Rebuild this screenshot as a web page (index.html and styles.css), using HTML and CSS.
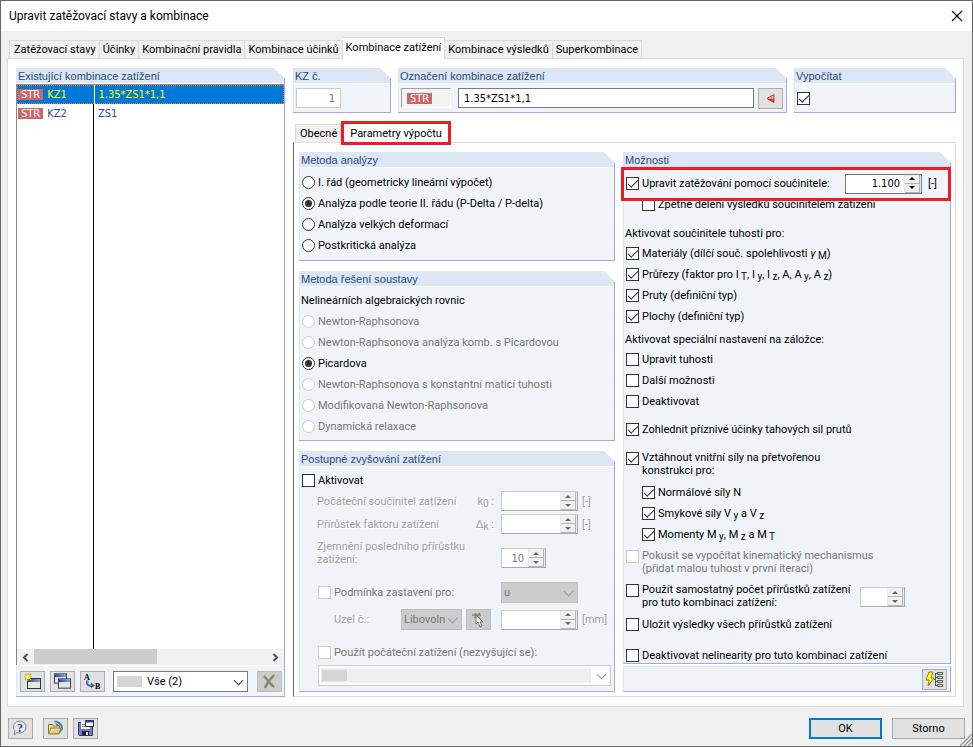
FILE: index.html
```html
<!DOCTYPE html>
<html lang="cs">
<head>
<meta charset="utf-8">
<title>Upravit zatěžovací stavy a kombinace</title>
<link rel="stylesheet" href="styles.css">
</head>
<body>
<svg class="defs" aria-hidden="true">
  <defs>
    <linearGradient id="bar" x1="0" x2="1"><stop offset="0" stop-color="#24449a"/><stop offset="1" stop-color="#8fa5dd"/></linearGradient>
    <linearGradient id="folder" x1="0" y1="0" x2="1" y2="1"><stop offset="0" stop-color="#fff4b8"/><stop offset="1" stop-color="#c9b055"/></linearGradient>
    <symbol id="win" viewBox="0 0 14 11"><rect x=".5" y=".5" width="13" height="10" fill="#e6e6e6" stroke="#333"/><rect x="1" y="1" width="12" height="3" fill="url(#bar)"/></symbol>
  </defs>
</svg>
<div class="window">
  <header class="titlebar">
    <h1>Upravit zatěžovací stavy a kombinace</h1>
    <button class="close" aria-label="Zavřít"><svg width="12" height="12" viewBox="0 0 12 12"><path d="M1 1l10 10M11 1L1 11" stroke="#000" stroke-width="1.2"/></svg></button>
  </header>

  <nav class="tabs main-tabs">
    <button class="tab">Zatěžovací stavy</button>
    <button class="tab">Účinky</button>
    <button class="tab">Kombinační pravidla</button>
    <button class="tab">Kombinace účinků</button>
    <button class="tab active">Kombinace zatížení</button>
    <button class="tab">Kombinace výsledků</button>
    <button class="tab">Superkombinace</button>
  </nav>

  <main class="page">
    <section class="group list-group">
      <h2>Existující kombinace zatížení</h2>
      <div class="list">
        <table>
          <tr class="selected"><td><span class="str">STR</span>KZ1</td><td>1.35*ZS1*1,1</td></tr>
          <tr><td><span class="str">STR</span>KZ2</td><td>ZS1</td></tr>
        </table>
      </div>
      <div class="scrollbar">
        <button aria-label="Vlevo"><svg width="7" height="9" viewBox="0 0 7 9"><path d="M5.500 1L2 4.500l3.500 3.500" fill="none" stroke="#505050" stroke-width="2"/></svg></button>
        <div class="track"><div class="thumb"></div></div>
        <button aria-label="Vpravo"><svg width="7" height="9" viewBox="0 0 7 9"><path d="M1.500 1L5 4.500L1.500 8" fill="none" stroke="#505050" stroke-width="2"/></svg></button>
      </div>
      <div class="toolbar">
        <button class="icon-btn" aria-label="Nová kombinace"><svg width="17" height="17" viewBox="0 0 17 17"><use href="#win" x="3" y="5" width="14" height="11"/><path d="M4 0v8M0 4h8M1 1l6 6M7 1L1 7" stroke="#c9b800" stroke-width="1.200"/><circle cx="4" cy="4" r="2" fill="#ffff45"/></svg></button>
        <button class="icon-btn" aria-label="Kopírovat kombinaci"><svg width="17" height="17" viewBox="0 0 17 17"><use href="#win" x="0" y="0" width="13" height="11"/><use href="#win" x="4" y="5" width="13" height="11"/></svg></button>
        <button class="icon-btn" aria-label="Přečíslovat"><svg width="17" height="17" viewBox="0 0 17 17"><text x="0" y="7" class="glyph">A</text><text x="11" y="16" class="glyph">B</text><path d="M3.500 7.500C2.500 12 5 13 8 12.500" fill="none" stroke="#4967a8" stroke-width="2.600"/><path d="M4 8c0 3 1 4 4 4" fill="none" stroke="#b9cdf0"/><path d="M7 9.500l4 3-4 3z" fill="#4967a8"/></svg></button>
        <div class="combo filter"><select aria-label="Filtr"><option>Vše (2)</option></select><span class="swatch"></span></div>
        <button class="icon-btn off" aria-label="Smazat" disabled><svg width="15" height="15" viewBox="0 0 15 15"><path d="M2 2c3 3 6 8 10 11M12 1C8 5 5 9 3 14" fill="none" stroke="#858579" stroke-width="2.400"/></svg></button>
      </div>
    </section>

    <div class="detail">
      <div class="top-row">
        <section class="group">
          <h2><label for="number">KZ č.</label></h2>
          <div class="inline"><input id="number" class="text number" value="1" disabled></div>
        </section>
        <section class="group">
          <h2><label for="name">Označení kombinace zatížení</label></h2>
          <div class="inline">
            <span class="category"><span class="str">STR</span></span>
            <input id="name" class="text name" value="1.35*ZS1*1,1">
            <button class="icon-btn pick" aria-label="Vybrat"><svg width="11" height="11" viewBox="0 0 11 11"><path d="M2 5.500L9 1.500v8z" fill="#f4a0a0" stroke="#a84848"/><path d="M2 5.500L9 9.500v-3z" fill="#d82020"/></svg></button>
          </div>
        </section>
        <section class="group">
          <h2><label for="calc">Vypočítat</label></h2>
          <div class="inline"><input type="checkbox" id="calc" checked></div>
        </section>
      </div>

      <nav class="tabs sub-tabs">
        <button class="tab">Obecné</button>
        <button class="tab active marked">Parametry výpočtu</button>
      </nav>

      <div class="params">
        <div class="column spaced">
          <section class="group">
            <h2>Metoda analýzy</h2>
            <div class="rows method">
              <label class="row"><input type="radio" name="m">I. řád (geometricky lineární výpočet)</label>
              <label class="row"><input type="radio" name="m" checked>Analýza podle teorie II. řádu (P-Delta / P-delta)</label>
              <label class="row"><input type="radio" name="m">Analýza velkých deformací</label>
              <label class="row"><input type="radio" name="m">Postkritická analýza</label>
            </div>
          </section>
          <section class="group">
            <h2>Metoda řešení soustavy</h2>
            <div class="rows">
              <p class="row">Nelineárních algebraických rovnic</p>
              <label class="row dim"><input type="radio" name="s" disabled>Newton-Raphsonova</label>
              <label class="row dim"><input type="radio" name="s" disabled>Newton-Raphsonova analýza komb. s Picardovou</label>
              <label class="row"><input type="radio" name="s" checked>Picardova</label>
              <label class="row dim"><input type="radio" name="s" disabled>Newton-Raphsonova s konstantní maticí tuhosti</label>
              <label class="row dim"><input type="radio" name="s" disabled>Modifikovaná Newton-Raphsonova</label>
              <label class="row dim"><input type="radio" name="s" disabled>Dynamická relaxace</label>
            </div>
          </section>
          <section class="group grow">
            <h2>Postupné zvyšování zatížení</h2>
            <div class="rows">
              <label class="row"><input type="checkbox">Aktivovat</label>
              <div class="steps">
                <label class="etched" for="k0">Počáteční součinitel zatížení</label><span class="etched sym">k<sub>0</sub> :</span>
                <span class="spin off"><input id="k0" disabled><span class="arrows"><button disabled aria-label="Zvýšit"></button><button disabled aria-label="Snížit"></button></span></span><span class="etched">[-]</span>
                <label class="etched" for="dk">Přírůstek faktoru zatížení</label><span class="etched sym">Δ<sub>k</sub> :</span>
                <span class="spin off"><input id="dk" disabled><span class="arrows"><button disabled aria-label="Zvýšit"></button><button disabled aria-label="Snížit"></button></span></span><span class="etched">[-]</span>
              </div>
              <div class="steps refine">
                <label class="etched two" for="ref">Zjemnění posledního přírůstku zatížení:</label>
                <span class="spin off small"><input id="ref" value="10" disabled><span class="arrows"><button disabled aria-label="Zvýšit"></button><button disabled aria-label="Snížit"></button></span></span>
              </div>
              <div class="steps stop">
                <label class="row dim wide"><input type="checkbox" disabled>Podmínka zastavení pro:</label>
                <div class="combo off"><select disabled aria-label="Veličina"><option>u</option></select></div>
              </div>
              <div class="steps node">
                <label class="etched node-label" for="node">Uzel č.:</label>
                <div class="node-pick">
                  <div class="combo off"><select id="node" disabled><option>Libovolný</option></select></div>
                  <button class="icon-btn off" disabled aria-label="Vybrat uzel"><svg width="16" height="16" viewBox="0 0 16 16"><path d="M1 3h9M4 1l5 6M9 1L3 6" stroke="#858585" stroke-width="1.500"/><path d="M5 3v9l2-2 2 5 2-1-2-4h3z" fill="#f2f2e8" stroke="#777"/></svg></button>
                </div>
                <span class="spin off"><input disabled aria-label="Mezní hodnota"><span class="arrows"><button disabled aria-label="Zvýšit"></button><button disabled aria-label="Snížit"></button></span></span><span class="etched">[mm]</span>
              </div>
              <label class="row dim indent initial"><input type="checkbox" disabled>Použít počáteční zatížení (nezvyšující se):</label>
              <div class="combo load"><select disabled aria-label="Počáteční zatížení"><option></option></select><span class="fill"></span><span class="swatch"></span></div>
            </div>
          </section>
        </div>

        <div class="column options">
          <section class="group grow">
            <h2>Možnosti</h2>
            <div class="rows opts">
              <div class="row factor">
                <label class="row"><input type="checkbox" checked>Upravit zatěžování pomocí součinitele:</label>
                <span class="spin"><input value="1.100" aria-label="Součinitel"><span class="arrows"><button aria-label="Zvýšit"></button><button aria-label="Snížit"></button></span></span><span>[-]</span>
              </div>
              <label class="row indent"><input type="checkbox">Zpětné dělení výsledků součinitelem zatížení</label>
              <p class="row caption first">Aktivovat součinitele tuhosti pro:</p>
              <label class="row"><input type="checkbox" checked><span>Materiály (dílčí souč. spolehlivosti <i>γ</i><sub> M</sub>)</span></label>
              <label class="row"><input type="checkbox" checked><span>Průřezy (faktor pro I<sub> T</sub>, I<sub> y</sub>, I<sub> z</sub>, A, A<sub> y</sub>, A<sub> z</sub>)</span></label>
              <label class="row"><input type="checkbox" checked>Pruty (definiční typ)</label>
              <label class="row"><input type="checkbox" checked>Plochy (definiční typ)</label>
              <p class="row caption">Aktivovat speciální nastavení na záložce:</p>
              <label class="row"><input type="checkbox">Upravit tuhosti</label>
              <label class="row"><input type="checkbox">Další možnosti</label>
              <label class="row"><input type="checkbox">Deaktivovat</label>
              <label class="row tension"><input type="checkbox" checked>Zohlednit příznivé účinky tahových sil prutů</label>
              <label class="row pair forces"><input type="checkbox" checked><span>Vztáhnout vnitřní síly na přetvořenou<br>konstrukci pro:</span></label>
              <label class="row indent"><input type="checkbox" checked>Normálové síly N</label>
              <label class="row indent"><input type="checkbox" checked><span>Smykové síly V<sub> y</sub> a V<sub> z</sub></span></label>
              <label class="row indent"><input type="checkbox" checked><span>Momenty M<sub> y</sub>, M<sub> z</sub> a M<sub> T</sub></span></label>
              <label class="row pair dim kinematic"><input type="checkbox" disabled><span>Pokusit se vypočítat kinematický mechanismus<br>(přidat malou tuhost v první iteraci)</span></label>
              <div class="row pair increments">
                <label class="row pair"><input type="checkbox"><span>Použít samostatný počet přírůstků zatížení<br>pro tuto kombinaci zatížení:</span></label>
                <span class="spin off small"><input disabled aria-label="Počet přírůstků"><span class="arrows"><button disabled aria-label="Zvýšit"></button><button disabled aria-label="Snížit"></button></span></span>
              </div>
              <label class="row save"><input type="checkbox">Uložit výsledky všech přírůstků zatížení</label>
              <label class="row nonlinear"><input type="checkbox">Deaktivovat nelinearity pro tuto kombinaci zatížení</label>
            </div>
          </section>
          <div class="strip">
            <button class="icon-btn" aria-label="Podrobnosti"><svg width="19" height="17" viewBox="0 0 19 17"><path d="M4 1L1 9h3l-1 6 6-8H6l2-6z" fill="#ffff20" stroke="#8a8420"/><path d="M9 8.500h2M10.500 2v13M10.500 2.500h2M10.500 6.500h2M10.500 10.500h2M10.500 14.500h2" stroke="#555" fill="none"/><path d="M12.500 1.500h5v2h-5zM12.500 5.500h5v2h-5zM12.500 9.500h5v2h-5zM12.500 13.500h5v2h-5z" fill="#eee" stroke="#555"/></svg></button>
          </div>
          <span class="highlight"></span>
        </div>
      </div>
    </div>
  </main>

  <footer class="footer">
    <button class="icon-btn" aria-label="Nápověda"><svg width="17" height="17" viewBox="0 0 17 17"><path d="M8 1a6.500 6 0 1 1-3 11.500L2 15l1-4A6.500 6 0 0 1 8 1z" fill="#e9edf2" stroke="#7d858d"/><text x="5" y="12" class="question">?</text></svg></button>
    <button class="icon-btn gap" aria-label="Otevřít"><svg width="17" height="17" viewBox="0 0 17 17"><path d="M7 1c5-1 9 3 9 8l-3 4z" fill="#4f78ad"/><path d="M8 3c3 0 5 2 6 6" stroke="#dfeaff" fill="none"/><path d="M1.500 14V4.500h4l1 1.500h6v3" fill="#ead98a" stroke="#8d7c36"/><path d="M1.500 14l2.500-6h10l-2 6z" fill="url(#folder)" stroke="#8d7c36"/></svg></button>
    <button class="icon-btn" aria-label="Uložit"><svg width="17" height="17" viewBox="0 0 17 17"><path d="M1.500 2.500h14v13h-13l-1-1z" fill="#7777cf" stroke="#34346e"/><path d="M4 2h9v7H4z" fill="#f5f5f5"/><path d="M5 4.500h5M5 6.500h6" stroke="#888"/><path d="M5 11h7v4H5z" fill="#222"/><path d="M9 12h2v3H9z" fill="#eee"/><path d="M8.500.5h8v6h-8z" fill="#fff" stroke="#222"/><path d="M8 1.500h9" stroke="#24449a" stroke-width="2"/></svg></button>
    <button class="action primary">OK</button>
    <button class="action">Storno</button>
    <svg class="grip" width="12" height="12" viewBox="0 0 12 12"><path d="M0 12L12 0M4 12l8-8M8 12l4-4" stroke="#999" stroke-width="1.500"/></svg>
  </footer>
</div>
</body>
</html>
```
FILE: styles.css
```css
* { box-sizing: border-box; }

body {
  margin: 0;
  font: 11px/13px Roboto, "Liberation Sans", sans-serif;
  color: #000;
}

button, input, select { font: inherit; color: inherit; margin: 0; padding: 0; }
h1, h2, p { margin: 0; font-weight: normal; }
svg { display: block; }
.defs { position: absolute; width: 0; height: 0; }

.window {
  display: flex;
  flex-direction: column;
  position: relative;
  min-height: 100vh;
  border: 1px solid #666;
  background: #f0f0f0;
}

.titlebar {
  display: flex;
  align-items: center;
  justify-content: space-between;
  height: 30px;
  padding: 0 9px 0 8px;
  background: #fff;
}
.titlebar h1 { font-size: 12px; }
.close { border: 0; background: none; }

/* Tabs */
.tabs { display: flex; align-items: flex-end; }
.main-tabs { padding: 6px 8px 0; }
.tab {
  height: 18px;
  padding: 0 3px;
  border: 1px solid #d9d9d9;
  border-width: 1px 1px 0 0;
  background: #f0f0f0;
  white-space: nowrap;
}
.tab:first-child { padding-left: 4px; border-left-width: 1px; }
.tab.active {
  position: relative;
  height: 22px;
  margin-bottom: -1px;
  padding-bottom: 2px;
  background: #fff;
}
.sub-tabs { padding: 8px 2px 0; }
.tab.marked {
  height: 24px;
  margin-bottom: -3px;
  padding: 0 6px;
  border: 3px solid #ed1c24;
}

.page {
  display: grid;
  grid-template-columns: 269fr 663fr;
  gap: 8px;
  flex: 1;
  margin: 0 8px 0 6px;
  padding: 9px 7px 9px 8px;
  border: 1px solid #dcdcdc;
  background: #fff;
}

/* Titled boxes with a cut corner */
.group {
  border: 1px solid #a6a6e8;
  border-width: 0 1px 1px 0;
  background: #f0f4f9;
  box-shadow: inset 1px 0 #dce6f4;
  clip-path: polygon(0 0, calc(100% - 11px) 0, 100% 11px, 100% 100%, 0 100%);
}
.group h2 {
  height: 16px;
  padding-left: 2px;
  border-bottom: 1px solid #fff;
  background: #dce6f4;
  color: #1f4e79;
  font: 11px/16px "Liberation Sans", Arial, sans-serif;
}
.grow { flex: 1; }

/* List of combinations */
.list-group { display: flex; flex-direction: column; }
.list {
  flex: 1;
  border: 1px solid #828790;
  border-width: 1px 0 0 1px;
  background: linear-gradient(#000, #000) 76px 0 / 1px 100% no-repeat #fff;
}
.list table { width: 100%; border-collapse: collapse; }
.list td {
  height: 19px;
  padding: 0 0 0 4px;
  color: #2a4a9c;
  font-family: "DejaVu Sans Condensed", sans-serif;
}
.list td:first-child { width: 77px; padding-left: 1px; }
.list .selected td { color: #ff0; background: #0078d7; }
.list .selected td:first-child { border-right: 1px solid #fff; }
.list .selected { outline: 1px dotted #e08030; outline-offset: -1px; }
.str {
  display: inline-block;
  margin-right: 4px;
  padding: 0 3px;
  background: #cd6666;
  color: #fff;
  font: 11px/11px "DejaVu Sans Condensed", sans-serif;
}
.scrollbar { display: flex; height: 16px; background: #f0f0f0; border-left: 1px solid #828790; }
.scrollbar button { display: grid; place-items: center; width: 17px; border: 0; background: none; }
.track { flex: 1; }
.thumb { width: 53%; height: 15px; background: #cdcdcd; }
.toolbar {
  display: flex;
  align-items: center;
  gap: 5px;
  height: 31px;
  padding: 0 2px 0 4px;
  border-top: 1px solid #fff;
}
.filter { flex: 1; margin: 0 4px 0 3px; }
.glyph { font: bold 8px "Liberation Serif", serif; }
.question { font: bold 12px "Liberation Serif", serif; fill: #24449a; }

/* Controls */
.icon-btn {
  display: grid;
  place-items: center;
  width: 25px;
  height: 21px;
  border: 1px solid #adadad;
  background: #e1e1e1;
}
.icon-btn.off { border-color: #bfbfbf; background: #ccc; }

.combo { position: relative; height: 21px; }
.combo select {
  display: block;
  appearance: none;
  width: 100%;
  height: 100%;
  padding: 0 16px 0 2px;
  border: 1px solid #7a7a7a;
  border-radius: 0;
  background: #fff;
  opacity: 1;
}
.combo::after {
  content: "";
  position: absolute;
  right: 6px;
  top: 6px;
  width: 6px;
  height: 6px;
  border: 1px solid #444;
  border-width: 0 1px 1px 0;
  transform: rotate(45deg);
}
.combo.off select { border-color: #bfbfbf; background: #ccc; color: #777; }
.combo.off::after, .combo.load::after { border-color: #999; }
.combo.filter select { padding-left: 33px; }
.swatch { position: absolute; left: 4px; top: 5px; width: 25px; height: 11px; background: #d5d5d5; }
.combo.load select { border-color: #ccc; }
.fill { position: absolute; left: 3px; top: 3px; right: 20px; bottom: 3px; background: #efefef; }

.text {
  height: 20px;
  border: 1px solid #7a7a7a;
  background: #fff;
  font-family: "DejaVu Sans Condensed", sans-serif;
}
.text.number { width: 45px; padding-right: 5px; border-color: #ccc; color: #777; text-align: right; }
.text.name { flex: 1; min-width: 0; padding-left: 5px; }

input[type="checkbox"], input[type="radio"] {
  appearance: none;
  position: relative;
  flex: none;
  width: 13px;
  height: 13px;
  border: 1px solid #333;
  background: #fff;
}
input[type="radio"] { border-radius: 50%; }
input[type="radio"]:checked::before {
  content: "";
  position: absolute;
  inset: 2px;
  border-radius: 50%;
  background: #333;
}
input[type="checkbox"]:checked::before {
  content: "";
  position: absolute;
  left: 1px;
  top: 2px;
  width: 9px;
  height: 4px;
  border: 1px solid #333;
  border-width: 0 0 1px 1px;
  transform: rotate(-45deg);
}
input[type="checkbox"]:disabled, input[type="radio"]:disabled { border-color: #ccc; }

.spin {
  display: flex;
  width: 77px;
  height: 20px;
  border: 1px solid #7a7a7a;
  background: #fff;
}
.spin input {
  flex: 1;
  min-width: 0;
  padding-right: 4px;
  border: 0;
  background: none;
  font-family: "DejaVu Sans Condensed", sans-serif;
  text-align: right;
}
.spin.small { width: 45px; }
.spin.off { border-color: #ccc #aaa #aaa #ccc; color: #777; }
.arrows { display: flex; flex-direction: column; width: 17px; padding: 0 1px; background: #e8e8e8; }
.arrows button {
  display: grid;
  place-items: center;
  flex: 1;
  border: 1px solid #b5b5b5;
  border-width: 0 1px 1px 0;
  background: #f0f0f0;
}
.arrows button::before {
  content: "";
  border: 3px solid transparent;
  border-top-width: 0;
  border-bottom-color: #000;
}
.arrows button:last-child::before { transform: rotate(180deg); }
.off .arrows button::before { border-bottom-color: #666; }

/* Combination header */
.detail { display: flex; flex-direction: column; min-width: 0; }
.top-row { display: grid; grid-template-columns: 98fr 389fr 162fr; gap: 7px; }
.inline { display: flex; align-items: center; height: 28px; padding: 0 3px; }
.category {
  display: flex;
  align-items: center;
  width: 50px;
  height: 20px;
  margin-right: 7px;
  padding-left: 5px;
  border: 1px solid #a0a0a0;
  border-color: #a0a0a0 #fff #fff #a0a0a0;
  background: #f3f3f3;
}
.pick { margin-left: 4px; }

/* Calculation parameters */
.params {
  display: grid;
  grid-template-columns: 316fr 328fr;
  gap: 8px;
  flex: 1;
  padding: 9px 4px 4px 5px;
  border: 1px solid #dcdcdc;
  border-left-color: #696969;
}
.column { display: flex; flex-direction: column; min-width: 0; }
.spaced { gap: 10px; }
.rows { padding: 3px 2px; }
.rows.method { padding: 4px 2px; }
.row { display: flex; align-items: center; gap: 3px; height: 21px; padding-left: 1px; white-space: nowrap; }
p.row { padding-left: 0; }
.row .row { padding-left: 0; }
.indent { margin-left: 16px; }
.dim { color: #777; }
.etched { color: #a0a0a0; text-shadow: 1px 1px #fff; white-space: nowrap; }
sub { font-size: 10px; line-height: 1px; vertical-align: -2px; }

.steps {
  display: grid;
  grid-template-columns: 150px 1fr 77px 30px;
  align-items: center;
  row-gap: 3px;
  column-gap: 4px;
  padding-left: 16px;
}
.sym { padding-right: 3px; text-align: right; }
.refine { align-items: end; margin-top: 6px; }
.refine .two { grid-column: 1 / 3; padding-right: 10px; padding-bottom: 2px; white-space: normal; }
.stop { margin-top: 14px; }
.stop .wide { grid-column: 1 / 3; }
.node { grid-template-columns: 80px 1fr 77px 30px; margin-top: 6px; }
.node-label { padding-left: 17px; }
.node-pick { display: flex; gap: 4px; margin-right: 6px; }
.node-pick .combo { flex: 1; min-width: 0; }
.initial { margin-top: 12px; }
.load { margin: 2px 1px 0 17px; }

.options { position: relative; gap: 2px; }
.rows.opts { padding: 5px 2px 0; }
.factor { justify-content: flex-start; }
.factor .spin { margin-left: auto; height: 20px; }
.factor > span:last-child { width: 23px; padding-left: 3px; }
.caption { height: 20px; margin-top: 2px; }
.caption.first { margin-top: 8px; }
.pair { align-items: flex-start; height: 26px; }
.pair > input { margin-top: 1px; }
.tension { margin-top: 7px; }
.forces { margin: 11px 0 5px; }
.kinematic { margin-top: 4px; }
.increments { margin-top: 8px; }
.increments .spin { margin: 4px 43px 0 auto; }
.save { margin-top: 5px; }
.nonlinear { height: 16px; margin-top: 12px; }
.strip {
  display: flex;
  align-items: center;
  justify-content: flex-end;
  height: 26px;
  padding-right: 3px;
  border: 1px solid #dce6f4;
  border-right-color: #a6a6e8;
  border-bottom-color: #a6a6e8;
  background: #f0f4f9;
}
.highlight {
  position: absolute;
  left: -2px;
  right: 0;
  top: 15px;
  height: 34px;
  border: 3px solid #ed1c24;
  pointer-events: none;
}

.footer { display: flex; gap: 5px; padding: 11px 7px 7px; }
.footer .gap { margin-left: 5px; }
.action { width: 73px; height: 21px; border: 1px solid #adadad; background: #e1e1e1; }
.action.primary { margin-left: auto; margin-right: 5px; border: 2px solid #0078d7; }
.grip { position: absolute; right: 0; bottom: 0; }
```
